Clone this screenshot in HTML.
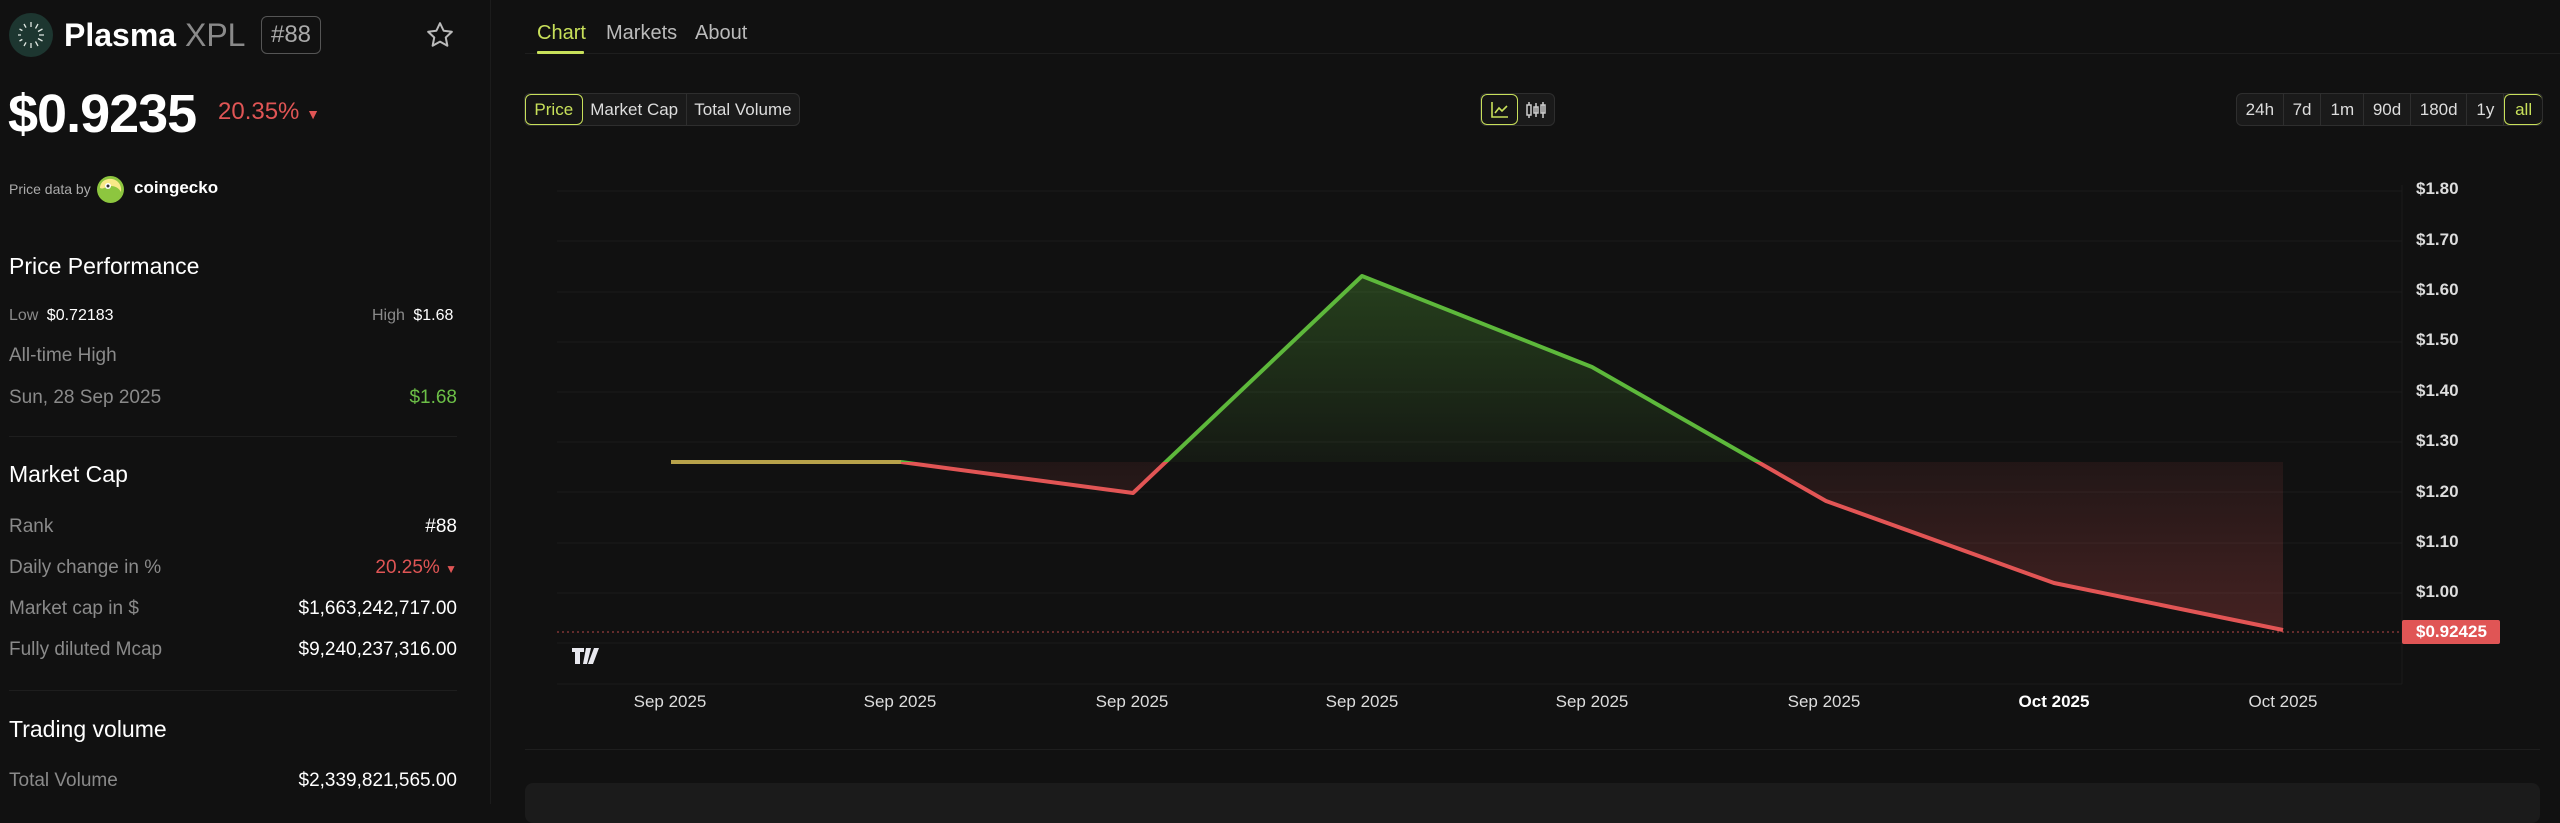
<!DOCTYPE html>
<html><head><meta charset="utf-8">
<style>
*{margin:0;padding:0;box-sizing:border-box}
body{width:2560px;height:804px;background:#111111;font-family:"Liberation Sans",sans-serif;color:#fff;position:relative;overflow:hidden}
.a{position:absolute;white-space:nowrap}
.lbl{color:#8a8a8a;font-size:19px}
.val{color:#fff;font-size:19px;text-align:right;right:2103px}
.h{font-size:23px;color:#fff}
.btn{position:absolute;top:93px;height:33px;display:flex;border:1px solid #2e2e2e;border-radius:6px;background:#1a1a1a;overflow:hidden}
.btn div{display:flex;align-items:center;justify-content:center;font-size:17px;color:#ddd;border-right:1px solid #2e2e2e;height:100%}
.btn div:last-child{border-right:none}
.btn .on{color:#c8e05a;border:1px solid #c8e05a;border-radius:6px;background:#151515}
.ax{position:absolute;left:2416px;font-size:17px;color:#ddd;font-weight:bold;transform:translateY(-50%)}
.xl{position:absolute;top:692px;font-size:17px;color:#ddd;transform:translateX(-50%)}
</style></head><body>
<svg class="a" style="left:9px;top:13px" width="44" height="44" viewBox="0 0 44 44">
<circle cx="22" cy="22" r="22" fill="#1d3630"/>
<g stroke="#dfe7e2" stroke-width="1.3">
<path d="M22 9 V14 M29 11 L26.5 15.5 M33.5 16 L29 18.5 M35 22 H30 M33.5 28 L29 25.5 M29 33 L26.5 28.5 M22 35 V30 M15 33 L17.5 28.5 M10.5 28 L15 25.5 M9 22 H14 M10.5 16 L15 18.5 M15 11 L17.5 15.5"/>
</g>
<circle cx="20" cy="22" r="8" fill="#1d3630"/>
</svg>
<div class="a" style="left:64px;top:17px;font-size:32px;font-weight:bold">Plasma <span style="color:#8a8a8a;font-weight:normal">XPL</span></div>
<div class="a" style="left:261px;top:16px;width:60px;height:38px;border:1.5px solid #555;border-radius:6px;color:#aaa;font-size:24px;text-align:center;line-height:35px">#88</div>
<svg class="a" style="left:425px;top:20px" width="30" height="30" viewBox="0 0 24 24"><path d="M12 2.5l2.9 6.1 6.6.8-4.9 4.6 1.3 6.6L12 17.3l-5.9 3.3 1.3-6.6-4.9-4.6 6.6-.8z" fill="none" stroke="#bbb" stroke-width="1.6" stroke-linejoin="round"/></svg>
<div class="a" style="left:8px;top:83px;font-size:54px;font-weight:bold;letter-spacing:-1px">$0.9235</div>
<div class="a" style="left:218px;top:98px;font-size:24px;color:#e05555">20.35% <span style="font-size:14px">▼</span></div>
<div class="a" style="left:9px;top:181px;font-size:14px;color:#aaa">Price data by</div>
<svg class="a" style="left:97px;top:176px" width="27" height="27" viewBox="0 0 27 27"><circle cx="13.5" cy="13.5" r="13.5" fill="#8dc63f"/><path d="M3 12 C3 5 10 2 15 3 C21 4 25 9 24 16 C22 12 18 10 14 10 C9 10 6 14 3 12Z" fill="#f9e988"/><circle cx="11" cy="10" r="3" fill="#fff"/><circle cx="11" cy="10" r="1.5" fill="#333"/></svg>
<div class="a" style="left:134px;top:178px;font-size:17px;font-weight:bold">coingecko</div>
<div class="a h" style="left:9px;top:253px">Price Performance</div>
<div class="a lbl" style="left:9px;top:307px;font-size:16px">Low <span style="color:#fff;margin-left:4px">$0.72183</span></div>
<div class="a lbl" style="left:372px;top:307px;font-size:16px">High <span style="color:#fff;margin-left:4px">$1.68</span></div>
<div class="a lbl" style="left:9px;top:345px">All-time High</div>
<div class="a lbl" style="left:9px;top:387px">Sun, 28 Sep 2025</div>
<div class="a val" style="top:387px;color:#6cbf47">$1.68</div>
<div class="a" style="left:9px;top:436px;width:448px;height:1px;background:#1e1e1e"></div>
<div class="a h" style="left:9px;top:461px">Market Cap</div>
<div class="a lbl" style="left:9px;top:516px">Rank</div><div class="a val" style="top:516px">#88</div>
<div class="a lbl" style="left:9px;top:557px">Daily change in %</div><div class="a val" style="top:557px;color:#e05555">20.25% <span style="font-size:12px">▼</span></div>
<div class="a lbl" style="left:9px;top:598px">Market cap in $</div><div class="a val" style="top:598px">$1,663,242,717.00</div>
<div class="a lbl" style="left:9px;top:639px">Fully diluted Mcap</div><div class="a val" style="top:639px">$9,240,237,316.00</div>
<div class="a" style="left:9px;top:690px;width:448px;height:1px;background:#1e1e1e"></div>
<div class="a h" style="left:9px;top:716px">Trading volume</div>
<div class="a lbl" style="left:9px;top:770px">Total Volume</div><div class="a val" style="top:770px">$2,339,821,565.00</div>
<div class="a" style="left:490px;top:0;width:1px;height:804px;background:#1c1c1c"></div>
<div class="a" style="left:537px;top:22px;font-size:20px;color:#c8e05a">Chart</div>
<div class="a" style="left:606px;top:22px;font-size:20px;color:#bbb">Markets</div>
<div class="a" style="left:695px;top:22px;font-size:20px;color:#bbb">About</div>
<div class="a" style="left:525px;top:53px;width:2035px;height:1px;background:#1e1e1e"></div>
<div class="a" style="left:537px;top:51px;width:47px;height:3px;background:#c8e05a;border-radius:1px"></div>
<div class="btn" style="left:524px;width:276px"><div class="on" style="width:58px">Price</div><div style="width:105px">Market Cap</div><div style="width:113px">Total Volume</div></div>
<div class="btn" style="left:1480px;width:75px"><div class="on" style="width:38px"><svg width="20" height="18" viewBox="0 0 20 18"><path d="M2 1V16H18M5 12l4-5 3 3 5-5" fill="none" stroke="#c8e05a" stroke-width="1.6"/></svg></div><div style="width:37px"><svg width="22" height="18" viewBox="0 0 22 18"><g fill="none" stroke="#ccc" stroke-width="1.5"><rect x="2" y="4" width="4" height="10"/><path d="M4 1v3M4 14v3M11 2v14M18 1v16"/><rect x="9" y="6" width="4" height="6"/><rect x="16" y="4" width="4" height="8"/></g></svg></div></div>
<div class="btn" style="left:2236px;width:307px;height:33px"><div style="width:47px">24h</div><div style="width:38px">7d</div><div style="width:43px">1m</div><div style="width:47px">90d</div><div style="width:57px">180d</div><div style="width:37px">1y</div><div class="on" style="width:38px">all</div></div>
<svg class="a" style="left:0;top:0" width="2560" height="804">
<defs>
<clipPath id="above"><rect x="0" y="0" width="2560" height="462"/></clipPath>
<clipPath id="below"><rect x="0" y="462" width="2560" height="400"/></clipPath>
<linearGradient id="gg" x1="0" y1="276" x2="0" y2="462" gradientUnits="userSpaceOnUse"><stop offset="0" stop-color="#5db83b" stop-opacity="0.28"/><stop offset="1" stop-color="#5db83b" stop-opacity="0.05"/></linearGradient>
<linearGradient id="rg" x1="0" y1="462" x2="0" y2="632" gradientUnits="userSpaceOnUse"><stop offset="0" stop-color="#e25555" stop-opacity="0.08"/><stop offset="1" stop-color="#e25555" stop-opacity="0.25"/></linearGradient>
</defs>
<g stroke="#1c1c1c" stroke-width="1">
<path d="M557 191H2402M557 241H2402M557 292H2402M557 342H2402M557 392H2402M557 442H2402M557 492H2402M557 543H2402M557 593H2402M557 643H2402M557 684H2402"/>
<path d="M2402 185V684"/>
</g>
<polygon points="671,462 901,462 1133,493 1362,276 1592,367 1826,501 2054,583 2283,630 2283,462" fill="url(#gg)" clip-path="url(#above)"/>
<polygon points="671,462 901,462 1133,493 1362,276 1592,367 1826,501 2054,583 2283,630 2283,462" fill="url(#rg)" clip-path="url(#below)"/>
<line x1="557" y1="632" x2="2402" y2="632" stroke="#e25555" stroke-width="1" stroke-dasharray="2 3" opacity="0.8"/>
<polyline points="671,462 901,462 1133,493 1362,276 1592,367 1826,501 2054,583 2283,630" fill="none" stroke="#5db83b" stroke-width="4" stroke-linejoin="round" clip-path="url(#above)"/>
<polyline points="671,462 901,462 1133,493 1362,276 1592,367 1826,501 2054,583 2283,630" fill="none" stroke="#e25555" stroke-width="4" stroke-linejoin="round" clip-path="url(#below)"/>
<polyline points="671,462 901,462" fill="none" stroke="#b8a24a" stroke-width="4"/>
<path d="M572 648h12v4h-4v12h-5v-12h-3z M586 648h5l-4 16h-4z M594 648h5l-6 16h-5z" fill="#e8e8ee"/>
<rect x="2402" y="620" width="98" height="24" rx="2" fill="#e05555"/>
</svg>
<div class="ax" style="top:189px">$1.80</div><div class="ax" style="top:240px">$1.70</div><div class="ax" style="top:290px">$1.60</div><div class="ax" style="top:340px">$1.50</div><div class="ax" style="top:391px">$1.40</div><div class="ax" style="top:441px">$1.30</div><div class="ax" style="top:492px">$1.20</div><div class="ax" style="top:542px">$1.10</div><div class="ax" style="top:592px">$1.00</div>
<div class="ax" style="top:632px;color:#fff">$0.92425</div>
<div class="xl" style="left:670px">Sep 2025</div><div class="xl" style="left:900px">Sep 2025</div><div class="xl" style="left:1132px">Sep 2025</div><div class="xl" style="left:1362px">Sep 2025</div><div class="xl" style="left:1592px">Sep 2025</div><div class="xl" style="left:1824px">Sep 2025</div><div class="xl" style="left:2054px;font-weight:bold;color:#fff">Oct 2025</div><div class="xl" style="left:2283px">Oct 2025</div>
<div class="a" style="left:525px;top:749px;width:2015px;height:1px;background:#1e1e1e"></div>
<div class="a" style="left:525px;top:783px;width:2015px;height:40px;background:#1b1b1b;border-radius:8px"></div>
</body></html>
